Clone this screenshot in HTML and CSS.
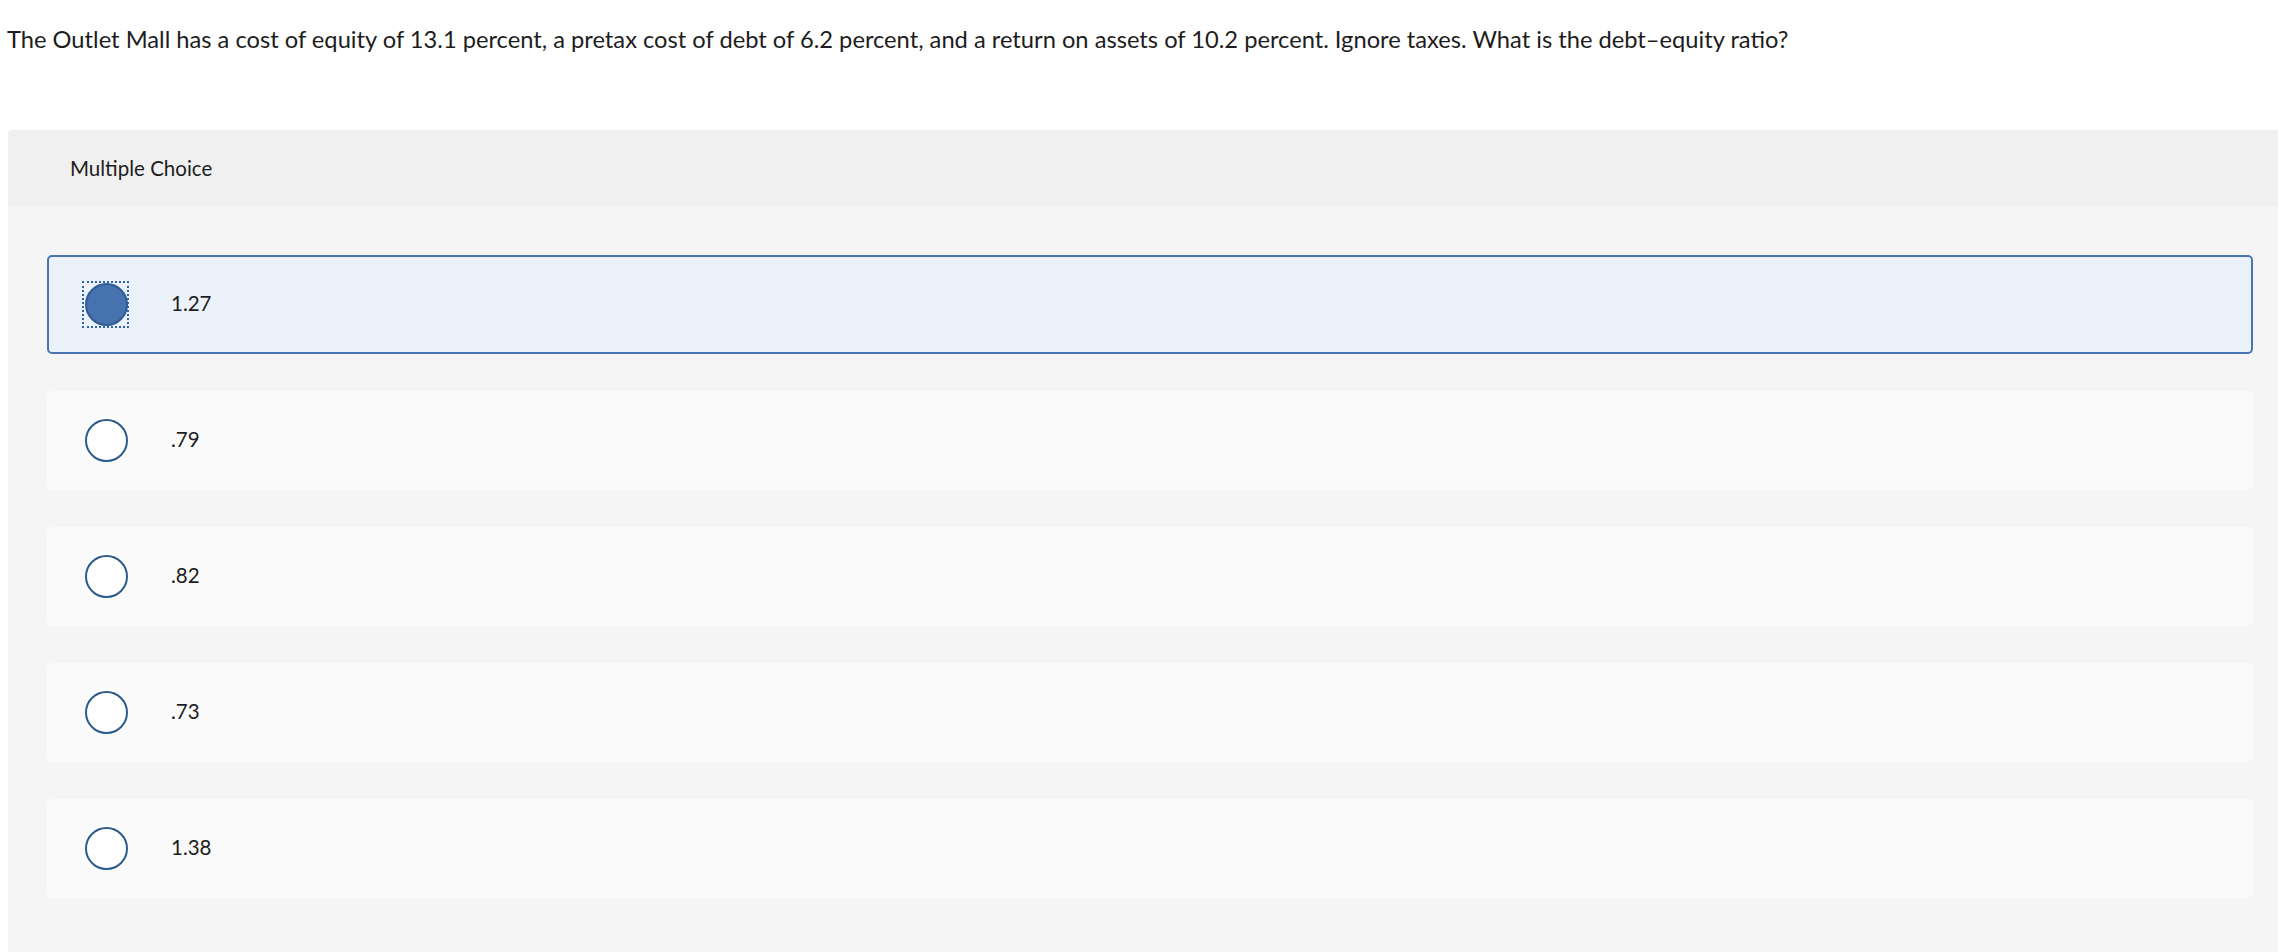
FILE: index.html
```html
<!DOCTYPE html>
<html>
<head>
<meta charset="utf-8">
<link rel="stylesheet" href="styles.css">
</head>
<body>
<p class="question">The Outlet Mall has a cost of equity of 13.1 percent, a pretax cost of debt of 6.2 percent, and a return on assets of 10.2 percent. Ignore taxes. What is the debt–equity ratio?</p>
<section class="panel">
  <div class="panel-header">Multiple Choice</div>
  <div class="panel-body">
    <label class="option selected"><span class="radio-wrap focused"><span class="radio checked"></span></span><span class="answer">1.27</span></label>
    <label class="option"><span class="radio-wrap"><span class="radio"></span></span><span class="answer">.79</span></label>
    <label class="option"><span class="radio-wrap"><span class="radio"></span></span><span class="answer">.82</span></label>
    <label class="option"><span class="radio-wrap"><span class="radio"></span></span><span class="answer">.73</span></label>
    <label class="option"><span class="radio-wrap"><span class="radio"></span></span><span class="answer">1.38</span></label>
  </div>
</section>
</body>
</html>
```
FILE: styles.css
```css
html, body {
  margin: 0;
  padding: 0;
  background: #ffffff;
}
body {
  font-family: "Lato", "Open Sans", sans-serif;
  color: #1d1d1d;
  overflow: hidden;
  height: 952px;
}
.question {
  margin: 0;
  padding: 23px 0 0 7px;
  font-size: 23.7px;
  line-height: 32px;
  height: 32px;
  margin-bottom: 75px;
  white-space: nowrap;
}
.panel {
  margin-left: 8px;
  background: #f5f5f5;
  border-top-left-radius: 4px;
  height: 822px;
}
.panel-header {
  height: 76px;
  background: #f0f0f0;
  border-top-left-radius: 4px;
  display: flex;
  align-items: center;
  padding-left: 62px;
  font-size: 20.5px;
}
.panel-body {
  padding: 49px 25px 0 39px;
  display: flex;
  flex-direction: column;
  gap: 37px;
}
.option {
  box-sizing: border-box;
  height: 99px;
  border: 2px solid transparent;
  border-radius: 5px;
  background: #fafafa;
  display: flex;
  align-items: center;
  padding-left: 33px;
}
.option.selected {
  border-color: #4a74b1;
  background: #ebf2fa;
}
.radio-wrap {
  box-sizing: border-box;
  width: 47px;
  height: 47px;
  padding: 1px 1px 1px 2px;
  border: 1px dotted transparent;
  flex: none;
}
.radio-wrap.focused {
  border: 2px dotted #2f63ad;
  padding: 0 0 0 1px;
}
.radio {
  display: block;
  box-sizing: border-box;
  width: 43px;
  height: 43px;
  border-radius: 50%;
  border: 2px solid #2e5a8e;
  background: #ffffff;
}
.radio.checked {
  background: #4673b0;
  border-color: #2f5c92;
}
.answer {
  margin-left: 42px;
  margin-bottom: 4px;
  font-size: 20.5px;
}
```
